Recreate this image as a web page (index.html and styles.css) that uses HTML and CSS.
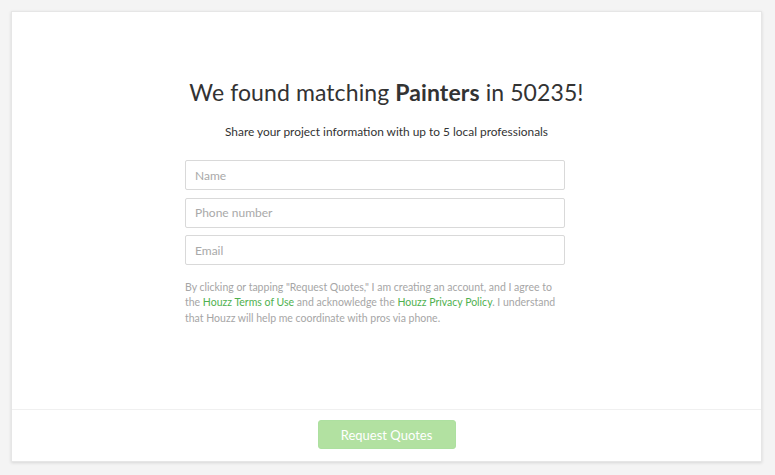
FILE: index.html
```html
<!DOCTYPE html>
<html>
<head>
<meta charset="utf-8">
<link rel="stylesheet" href="styles.css">
</head>
<body>
<div class="card">
  <div class="content">
    <h1 class="title">We found matching <strong>Painters</strong> in 50235!</h1>
    <p class="subtitle">Share your project information with up to 5 local professionals</p>
    <form class="form">
      <input class="field" type="text" placeholder="Name">
      <input class="field" type="text" placeholder="Phone number">
      <input class="field" type="text" placeholder="Email">
      <p class="legal"><span class="line">By clicking or tapping "Request Quotes," I am creating an account, and I agree to</span><span class="line">the <a class="link">Houzz Terms of Use</a> and acknowledge the <a class="link">Houzz Privacy Policy</a>. I understand</span><span class="line">that Houzz will help me coordinate with pros via phone.</span></p>
    </form>
  </div>
  <div class="footer">
    <button class="btn" type="button">Request Quotes</button>
  </div>
</div>
</body>
</html>
```
FILE: styles.css
```css
html, body { margin: 0; padding: 0; }
body {
  background: #f4f4f4;
  font-family: Lato, "Open Sans", sans-serif;
  width: 775px;
  height: 475px;
  overflow: hidden;
}
.card {
  margin: 11px 13px 0 11px;
  height: 451px;
  background: #fff;
  border: 1px solid #e6e6e6;
  box-sizing: border-box;
  box-shadow: 0 1px 3px rgba(0,0,0,0.12);
  display: flex;
  flex-direction: column;
}
.content {
  height: 398px;
  display: flex;
  flex-direction: column;
  align-items: center;
  border-bottom: 1px solid #f0f0f0;
  box-sizing: border-box;
}
.title {
  margin: 64px 0 0;
  font-size: 23px;
  font-weight: 400;
  color: #333;
  line-height: 32px;
  letter-spacing: 0.1px;
}
.title strong { font-weight: 700; }
.subtitle {
  margin: 15px 0 0;
  font-size: 11.9px;
  color: #333;
  line-height: 18px;
}
.form {
  width: 380px;
  margin: 19px 23px 0 0;
  display: flex;
  flex-direction: column;
  gap: 7.5px;
}
.field {
  height: 30px;
  box-sizing: border-box;
  border: 1px solid #d9d9d9;
  border-radius: 2px;
  padding: 0 9px;
  font-family: inherit;
  font-size: 12px;
  color: #333;
  outline: none;
}
.field::placeholder { color: #a9a9a9; }
.legal {
  margin: 7px 0 0;
  font-size: 10.5px;
  line-height: 15.5px;
  color: #a6a6a6;
  display: flex;
  flex-direction: column;
}
.line { white-space: nowrap; }
.link { color: #4fb14f; }
.footer {
  flex: 1;
  display: flex;
  justify-content: center;
  align-items: flex-start;
  padding-top: 10px;
}
.btn {
  width: 138px;
  height: 29px;
  border: 1px solid #ade0a0;
  border-radius: 3px;
  background: #b2e1a1;
  color: #fff;
  font-family: inherit;
  font-size: 13px;
  padding: 0;
}
```
